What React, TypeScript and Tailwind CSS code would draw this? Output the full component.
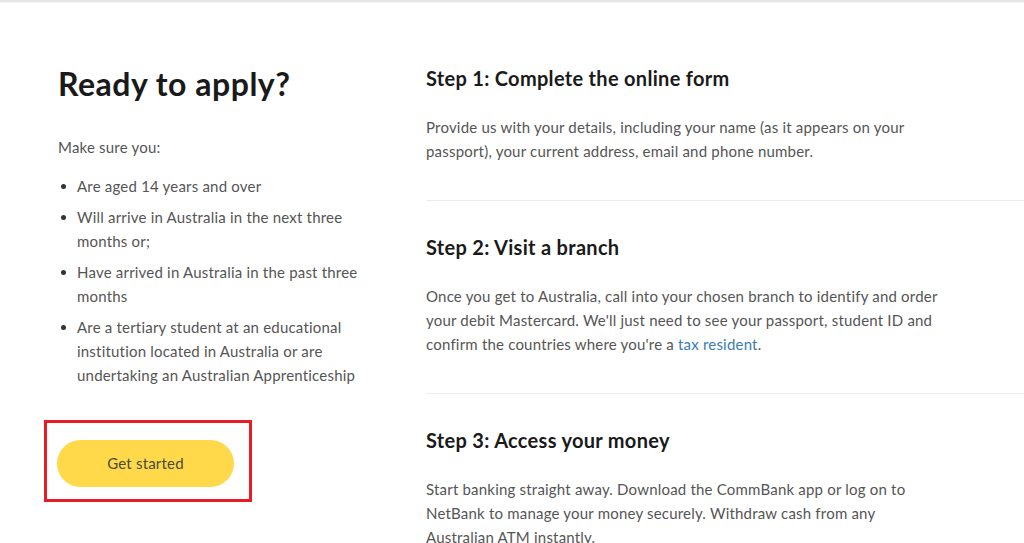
import React from "react";

const Step = ({ title, children, last }: { title: string; children: React.ReactNode; last?: boolean }) => (
  <div className={last ? "pt-8" : "pt-8 pb-[37px] border-b border-[#ececec]"}>
    <h3 className="text-[20px] leading-[28px] font-bold tracking-[0.3px] text-[#1a1a1a] mb-[23px]">{title}</h3>
    <p className="text-[15px] leading-6 tracking-[0.2px] text-[#555555] w-[516px]">{children}</p>
  </div>
);

export default function App() {
  return (
    <div className="w-[1024px] h-[543px] overflow-hidden bg-white" style={{ fontFamily: "Lato, 'Open Sans', sans-serif" }}>
      <div className="h-[3px] bg-[#e6e6e6] border-b border-[#f2f2f2]" />
      <div className="flex pl-[58px] pt-[62px]">
        <div className="w-[368px] shrink-0">
          <h2 className="text-[32px] leading-9 font-bold tracking-[0.5px] text-[#1a1a1a] mt-px">Ready to apply?</h2>
          <p className="mt-[33px] text-[15px] leading-6 tracking-[0.2px] text-[#555555]">Make sure you:</p>
          <ul className="mt-[15px] w-[300px] text-[15px] leading-6 tracking-[0.2px] text-[#555555]">
            {[
              "Are aged 14 years and over",
              "Will arrive in Australia in the next three months or;",
              "Have arrived in Australia in the past three months",
              "Are a tertiary student at an educational institution located in Australia or are undertaking an Australian Apprenticeship",
            ].map((t) => (
              <li key={t} className="flex mb-[7px]">
                <span className="w-[19px] shrink-0 flex items-start pt-[10px] pl-[3px]">
                  <span className="block w-[5px] h-[5px] rounded-full bg-[#333333]" />
                </span>
                <span>{t}</span>
              </li>
            ))}
          </ul>
          <div className="mt-[26px] -ml-[14px] inline-block border-[3px] border-[#e81c24] pt-[17px] pb-[12px] pl-[10px] pr-[15px]">
            <button className="w-[177px] h-[47px] rounded-full bg-[#ffd94a] text-[15px] tracking-[0.2px] text-[#4a4a3a]">Get started</button>
          </div>
        </div>
        <div className="flex-1 -mt-[33px]">
          <Step title="Step 1: Complete the online form">
            Provide us with your details, including your name (as it appears on your passport), your current address, email and phone number.
          </Step>
          <Step title="Step 2: Visit a branch">
            Once you get to Australia, call into your chosen branch to identify and order your debit Mastercard. We'll just need to see your passport, student ID and confirm the countries where you're a <span className="text-[#3a7cb4]">tax resident</span>.
          </Step>
          <Step title="Step 3: Access your money" last>
            Start banking straight away. Download the CommBank app or log on to NetBank to manage your money securely. Withdraw cash from any Australian ATM instantly.
          </Step>
        </div>
      </div>
    </div>
  );
}
